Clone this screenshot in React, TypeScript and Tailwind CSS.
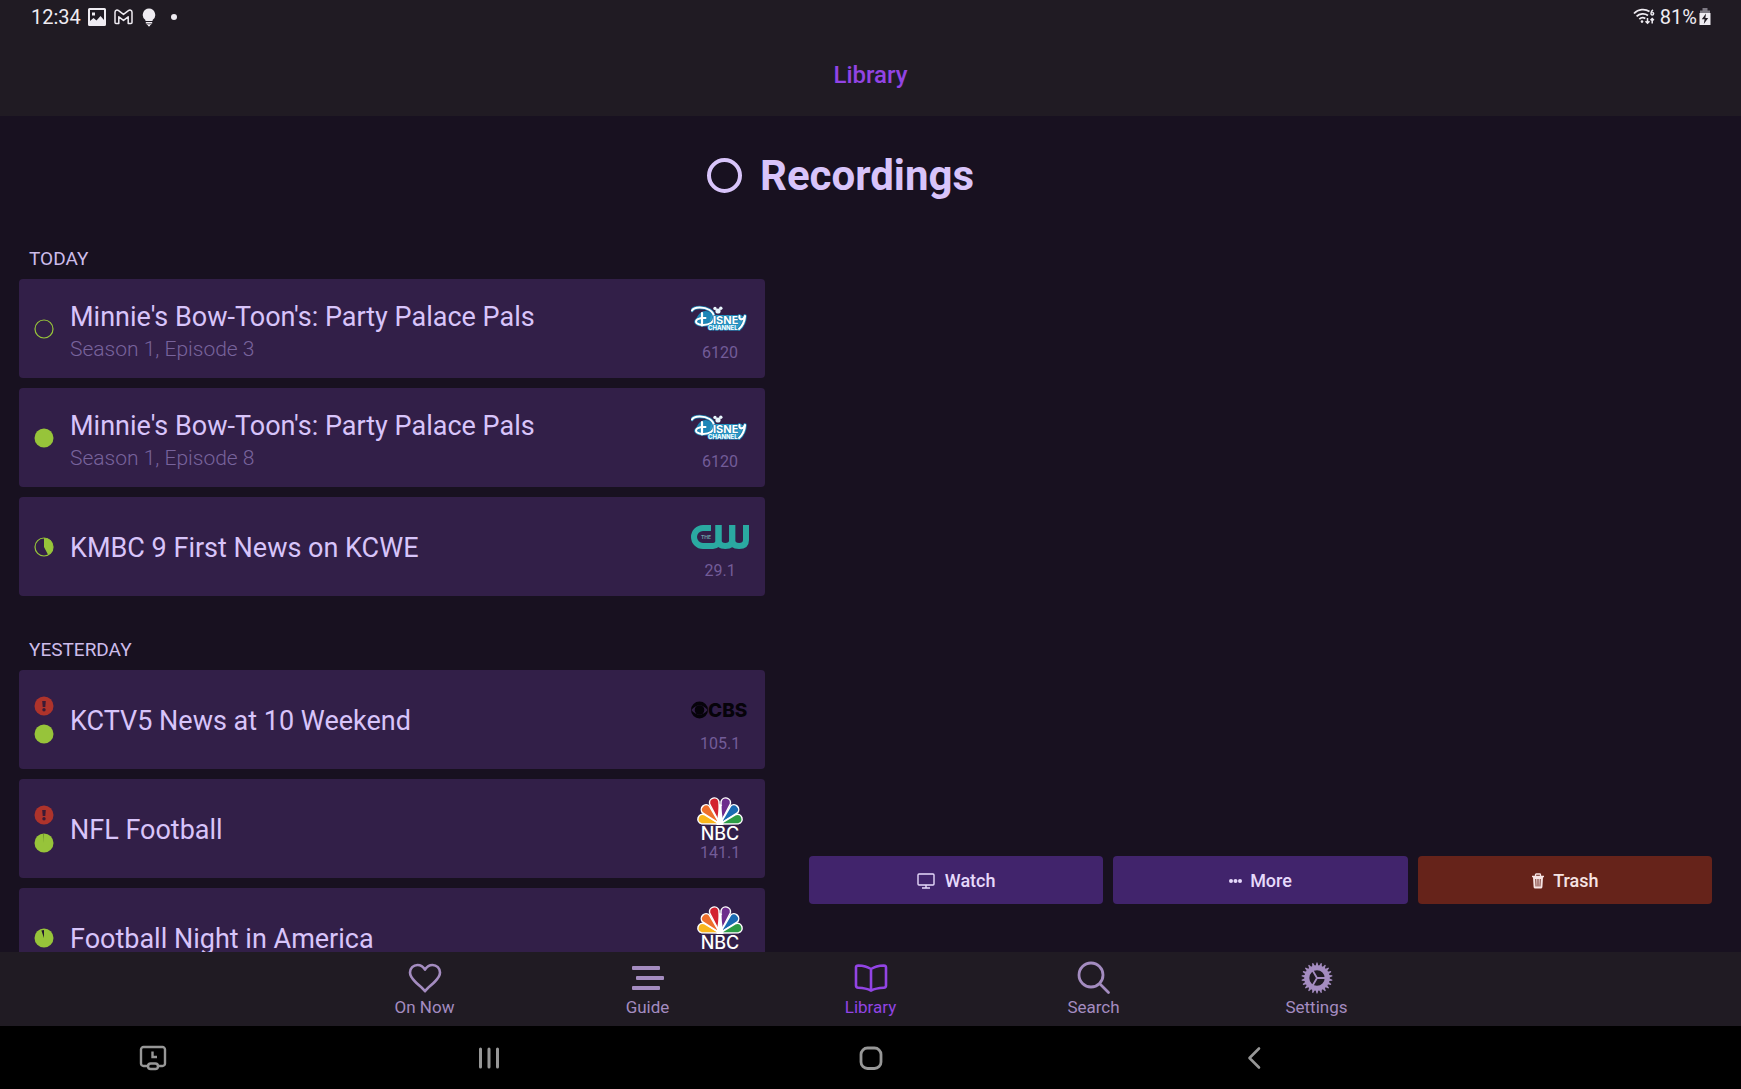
import React from "react";

type Progress = "empty" | "full" | "part" | "almost" | "nearly";
type Channel = "disney" | "cw" | "cbs" | "nbc";

interface Recording {
  title: string;
  subtitle?: string;
  progress: Progress;
  alert?: boolean;
  channel: Channel;
  number: string;
}

const sections: { label: string; items: Recording[] }[] = [
  {
    label: "TODAY",
    items: [
      { title: "Minnie's Bow-Toon's: Party Palace Pals", subtitle: "Season 1, Episode 3", progress: "empty", channel: "disney", number: "6120" },
      { title: "Minnie's Bow-Toon's: Party Palace Pals", subtitle: "Season 1, Episode 8", progress: "full", channel: "disney", number: "6120" },
      { title: "KMBC 9 First News on KCWE", progress: "part", channel: "cw", number: "29.1" },
    ],
  },
  {
    label: "YESTERDAY",
    items: [
      { title: "KCTV5 News at 10 Weekend", progress: "full", alert: true, channel: "cbs", number: "105.1" },
      { title: "NFL Football", progress: "almost", alert: true, channel: "nbc", number: "141.1" },
      { title: "Football Night in America", progress: "nearly", channel: "nbc", number: "141.1" },
    ],
  },
];

function ProgressDot({ kind }: { kind: Progress }) {
  const filled = kind === "full" || kind === "almost" || kind === "nearly";
  return (
    <svg width="20" height="20" viewBox="0 0 20 20" aria-hidden="true">
      <circle cx="10" cy="10" r={filled ? 9.5 : 9} fill={filled ? "#97c43a" : "none"} stroke="#97c43a" strokeWidth={filled ? 0 : 1.2} />
      {kind === "part" && <path d="M10 10V1a9 9 0 0 1 4.2 16.9z" fill="#97c43a" />}
      {kind === "almost" && <path d="M10 10 9.3 1h.7z" fill="#5f7f2c" />}
      {kind === "nearly" && <path d="M10 10 7.4 2.4 10 2z" fill="#21152e" />}
    </svg>
  );
}

function AlertDot() {
  return (
    <svg width="20" height="20" viewBox="0 0 20 20" aria-hidden="true">
      <circle cx="10" cy="10" r="9.5" fill="#ae332b" />
      <path d="M8.2 5h3.6l-.5 6H8.7z" fill="#3a1a35" />
      <circle cx="10" cy="13.8" r="1.7" fill="#3a1a35" />
    </svg>
  );
}

function DisneyLogo() {
  return (
    <svg width="58" height="28" viewBox="0 0 58 28" role="img" aria-label="Disney Channel" fill="none" strokeLinecap="round" strokeLinejoin="round">
      <path d="M5 15C8 5 16 4 21 9s-2 11-10 11-9-3-6-5z" fill="#1d86b8" />
      <path d="M20 10h30l3 2-4 12H17z" fill="#2c9cc9" />
      <path d="M1 5.500C3 1.500 13 1.500 18.500 5c5.500 3.600 6 10 1.500 13-4 2.600-12 2.600-14.500-.2-1.900-2.600 2.500-5.300 9-4.800" stroke="#1d7fae" strokeWidth="3.600" />
      <path d="M1 5.500C3 1.500 13 1.500 18.500 5c5.500 3.600 6 10 1.500 13-4 2.600-12 2.600-14.500-.2-1.900-2.600 2.500-5.300 9-4.800" stroke="#fff" strokeWidth="2" />
      <path d="M11 8v12.500" stroke="#fff" strokeWidth="2.200" />
      <g fill="#e9f7fd">
        <circle cx="27" cy="6" r="2.600" />
        <circle cx="24" cy="3.400" r="1.700" />
        <circle cx="29.800" cy="3.200" r="1.700" />
      </g>
      <text x="22" y="19" fontFamily="Inter, sans-serif" fontSize="11" fontWeight="700" fill="#fff" stroke="#1d7fae" strokeWidth="1.600" paintOrder="stroke">ISNE</text>
      <path d="M48.500 11c-1 4.500 4 4.500 5.500 0-.4 5.500-2 9.500-6 13" stroke="#1d7fae" strokeWidth="3.800" />
      <path d="M48.500 11c-1 4.500 4 4.500 5.500 0-.4 5.500-2 9.500-6 13" stroke="#fff" strokeWidth="2.200" />
      <text x="17" y="25" fontFamily="Inter, sans-serif" fontSize="6" fontWeight="700" fill="#fff" stroke="#2c9cc9" strokeWidth="1.200" paintOrder="stroke">CHANNEL</text>
    </svg>
  );
}

function CwLogo() {
  return (
    <svg width="58" height="24" viewBox="0 0 58 24" role="img" aria-label="The CW" fill="none" stroke="#2aa9a1" strokeWidth="6">
      <path d="M20 3h-8a9 9 0 0 0 0 18H22c3.600 0 5.500-2.400 5.500-6V0" />
      <path d="M27.500 0v15c0 4 2.400 6 6.800 6s6.900-2 6.900-6V0" />
      <path d="M41.200 0v15c0 4 2.400 6 6.900 6s6.900-2 6.900-6V0" />
      <text x="10" y="14" fontFamily="Inter, sans-serif" fontSize="5" fontWeight="700" fill="#6f9fa6" stroke="none">THE</text>
    </svg>
  );
}

function CbsLogo() {
  return (
    <svg width="60" height="24" viewBox="0 -3 60 24" role="img" aria-label="CBS">
      <circle cx="9.500" cy="9" r="8.500" fill="#06030a" />
      <path d="M1.300 9Q9.500-.600 17.700 9 9.500 18.600 1.300 9z" fill="#321f48" />
      <circle cx="9.500" cy="9" r="4.800" fill="#06030a" />
      <text x="18" y="16" fontFamily="Inter, sans-serif" fontSize="19" fontWeight="800" fill="#06030a">CBS</text>
    </svg>
  );
}

const feathers = [
  { angle: -74, color: "#f9b61b", length: 23 },
  { angle: -44, color: "#ee6f2b", length: 25 },
  { angle: -15, color: "#d3212f", length: 27 },
  { angle: 15, color: "#6d2b8c", length: 27 },
  { angle: 44, color: "#1a6bb2", length: 25 },
  { angle: 74, color: "#2c9c45", length: 23 },
];

function NbcLogo() {
  return (
    <svg width="48" height="50" viewBox="-1 -3 48 50" role="img" aria-label="NBC">
      {feathers.map((f) => {
        const c = f.length - 5;
        return (
          <path
            key={f.angle}
            transform={`translate(23 27) rotate(${f.angle})`}
            d={`M0 0L-4.800 ${-c}A4.800 4.800 0 0 1 4.800 ${-c}Z`}
            fill={f.color}
            stroke="#fff"
            strokeWidth="1.500"
            strokeLinejoin="round"
          />
        );
      })}
      <path d="M19.500 28 22.300 7l3 1-1.200 1.200L26.500 28z" fill="#fff" />
      <text x="23" y="43" textAnchor="middle" fontFamily="Inter, sans-serif" fontSize="18" fontWeight="500" fill="#fff">NBC</text>
    </svg>
  );
}

const logos: Record<Channel, () => React.JSX.Element> = {
  disney: DisneyLogo,
  cw: CwLogo,
  cbs: CbsLogo,
  nbc: NbcLogo,
};

function RecordingCard({ item }: { item: Recording }) {
  const Logo = logos[item.channel];
  return (
    <li>
      <button type="button" className="flex h-[99px] w-full items-center rounded bg-[#321f48] px-[15px] text-left">
        <span className="flex w-5 flex-col gap-2">
          {item.alert && <AlertDot />}
          <ProgressDot kind={item.progress} />
        </span>
        <span className="ml-4 flex min-w-0 flex-1 flex-col pt-0.5">
          <span className="truncate text-[27px] leading-[38px] text-[#d8c4fa]">{item.title}</span>
          {item.subtitle && <span className="text-[21px] leading-[26px] font-light text-[#78639c]">{item.subtitle}</span>}
        </span>
        <span className="flex w-[60px] flex-col items-center pt-1">
          <span className="flex h-11 items-center justify-center">
            <Logo />
          </span>
          <span className="text-base leading-6 text-[#735c98]">{item.number}</span>
        </span>
      </button>
    </li>
  );
}

function StatusBar() {
  return (
    <div className="flex h-[34px] items-center justify-between pr-[30px] pl-[31px] text-xl leading-none text-[#efecf2]">
      <div className="flex items-center">
        <span>12:34</span>
        <svg className="ml-[7px]" width="18" height="18" viewBox="0 0 18 18" aria-hidden="true">
          <path fillRule="evenodd" fill="#efecf2" d="M1.500 0h15A1.500 1.500 0 0 1 18 1.500v15a1.500 1.500 0 0 1-1.500 1.500h-15A1.500 1.500 0 0 1 0 16.500v-15A1.500 1.500 0 0 1 1.500 0zM2 2v11l3.500-3 3 2.500 4-4.500 3.500 4V2zM4 4.500h3v3H4z" />
        </svg>
        <svg className="ml-2" width="19" height="16" viewBox="0 0 19 16" fill="none" stroke="#efecf2" strokeWidth="1.500" strokeLinejoin="round" aria-hidden="true">
          <path d="M1 13.500V3.200C1 1 3.200.600 4.600 1.700L9.500 5.400l4.900-3.700C15.800.600 18 1 18 3.200v10.300q0 1-1 1h-2.800V7.800L9.500 11.400 4.800 7.800v6.700H2q-1 0-1-1z" />
        </svg>
        <svg className="ml-[9px]" width="14" height="19" viewBox="0 0 14 19" fill="#efecf2" aria-hidden="true">
          <path d="M7 .500a6.300 6.300 0 0 1 3.600 11.400V13H3.400v-1.100A6.300 6.300 0 0 1 7 .500zM3.800 14h6.400v1.500H3.800zM4.800 16.200h4.400V17H8.300l-.4 1.200H6.100L5.700 17h-.9z" />
        </svg>
        <span className="ml-[15px] size-1.5 rounded-full bg-[#efecf2]" />
      </div>
      <div className="flex items-center">
        <svg width="22" height="18" viewBox="0 0 22 18" fill="none" stroke="#efecf2" strokeWidth="1.800" aria-hidden="true">
          <path d="M1 5.500C5.500.800 12 .500 16.500 3.500M3.600 8.400c3-3 8-3.400 11.400-1M6.300 11.200c1.700-1.600 4.200-1.800 6-.6" />
          <circle cx="9" cy="13.600" r="1.300" fill="#efecf2" stroke="none" />
          <path strokeWidth="1.500" d="M14.500 10v5M12.500 13.300l2 2 2-2M19.200 15.500v-5M17.500 12.300l1.700-1.800 1.700 1.800M20 2c-2.400 1.500-2.600 5-.8 5s1.900-2.600 0-2.600" />
        </svg>
        <span className="ml-[5px]">81%</span>
        <svg className="ml-0.5" width="12" height="18" viewBox="0 0 12 18" aria-hidden="true">
          <path d="M3.500 0h5v2.500H11V5H1V2.500h2.500z" fill="#7d7983" />
          <path d="M.500 5h11v12h-11z" fill="#efecf2" />
          <path d="M7 5.500 2.800 11.300h2.800L4.800 16l4.400-6H6.400z" fill="#211c24" />
        </svg>
      </div>
    </div>
  );
}

const line = { fill: "none", stroke: "currentColor", strokeLinejoin: "round" as const, strokeLinecap: "round" as const };

const teeth = Array.from({ length: 22 }, (_, i) => (i * 360) / 22);

function GearIcon() {
  return (
    <svg width="32" height="32" viewBox="0 0 32 32" fill="none" stroke="currentColor">
      <circle cx="16" cy="16" r="10.200" strokeWidth="5" />
      {teeth.map((a) => (
        <path key={a} transform={`rotate(${a} 16 16)`} d="M14.600 4 15.500.500h1L17.400 4z" fill="currentColor" stroke="none" />
      ))}
      <path d="M16 16h9M16 16l-4.500-7.800M16 16l-4.500 7.800" strokeWidth="1.800" />
    </svg>
  );
}

const tabs = [
  {
    label: "On Now",
    icon: (
      <svg width="34" height="30" viewBox="0 0 34 30" {...line} strokeWidth="2.600">
        <path d="M17 28.200C15.500 25.800 10.500 22 7 18.500 4 15.500 2 12.800 2 9.600 2 5.200 5.300 2 9.500 2c3 0 5.700 1.700 7.500 4.600C18.800 3.700 21.500 2 24.500 2 28.700 2 32 5.200 32 9.600c0 3.200-2 5.900-5 8.900-3.500 3.500-8.500 7.300-10 9.700z" />
      </svg>
    ),
  },
  {
    label: "Guide",
    icon: (
      <svg width="34" height="26" viewBox="0 0 34 26" fill="currentColor">
        <rect x="1" y="1" width="28" height="4" rx="1" />
        <rect x="5" y="11" width="28" height="4" rx="1" />
        <rect x="1" y="21" width="28" height="4" rx="1" />
      </svg>
    ),
  },
  {
    label: "Library",
    active: true,
    icon: (
      <svg width="34" height="28" viewBox="0 0 34 28" {...line} strokeWidth="2.600">
        <path d="M17 5C13.500 2.800 9 1.700 4.300 1.500 2.700 1.500 2 2.200 2 3.600v18C2 23 2.700 23.700 4.300 23.800 9 24 13.500 24.800 17 26.600c3.500-1.800 8-2.600 12.700-2.800 1.600-.1 2.300-.8 2.300-2.200v-18c0-1.400-.7-2.100-2.300-2.100C25 1.700 20.500 2.800 17 5zM17 5v21.600" />
      </svg>
    ),
  },
  {
    label: "Search",
    icon: (
      <svg width="34" height="34" viewBox="0 0 34 34" {...line} strokeWidth="2.800">
        <circle cx="14" cy="14" r="12" />
        <path d="m23 23 8.500 8.500" />
      </svg>
    ),
  },
  { label: "Settings", icon: <GearIcon /> },
];

export default function App() {
  return (
    <div className="flex h-screen flex-col overflow-hidden bg-[#181120] font-['Roboto',sans-serif]">
      <header className="bg-[#201b23]">
        <StatusBar />
        <h1 className="flex h-[82px] items-center justify-center text-2xl font-medium text-[#9244e4]">Library</h1>
      </header>

      <main className="flex min-h-0 flex-1 flex-col">
        <div className="flex h-[123px] shrink-0 items-center justify-center gap-[18px] pr-[60px] pb-1 text-[#d8c4fa]">
          <span className="size-[35px] rounded-full border-4 border-[#d8c4fa]" />
          <h2 className="text-[42px] leading-none font-bold">Recordings</h2>
        </div>
        <div className="flex min-h-0 flex-1">
          <div className="flex w-[44%] flex-col gap-[34px] overflow-hidden pr-px pl-[19px]">
            {sections.map((section) => (
              <section key={section.label}>
                <h3 className="flex h-10 items-center pl-2.5 text-[19px] text-[#cdbcea]">{section.label}</h3>
                <ul className="flex flex-col gap-2.5">
                  {section.items.map((item, i) => (
                    <RecordingCard key={i} item={item} />
                  ))}
                </ul>
              </section>
            ))}
          </div>
          <div className="flex flex-1 items-end gap-2.5 pr-[29px] pb-12 pl-[43px] text-lg font-medium">
            <button type="button" className="flex h-12 flex-1 items-center justify-center gap-2.5 rounded-sm bg-[#41246c] pt-0.5 text-[#e6d9fb]">
              <svg width="18" height="16" viewBox="0 0 18 16" fill="none" stroke="currentColor" strokeWidth="1.400" aria-hidden="true">
                <rect x="1" y="1" width="16" height="11" rx="1" />
                <path d="M9 12v2.500M5 15h8" />
              </svg>
              Watch
            </button>
            <button type="button" className="flex h-12 flex-1 items-center justify-center gap-2 rounded-sm bg-[#41246c] pt-0.5 text-[#e6d9fb]">
              <svg width="13" height="4" viewBox="0 0 13 4" fill="currentColor" aria-hidden="true">
                <circle cx="2" cy="2" r="2" />
                <circle cx="6.500" cy="2" r="2" />
                <circle cx="11" cy="2" r="2" />
              </svg>
              More
            </button>
            <button type="button" className="flex h-12 flex-1 items-center justify-center gap-2 rounded-sm bg-[#66231a] pt-0.5 text-[#f6e3e3]">
              <svg width="14" height="16" viewBox="0 0 14 16" aria-hidden="true">
                <path d="M4.500 3V1.800q0-.8.800-.8h3.400q.8 0 .8.800V3" fill="none" stroke="currentColor" strokeWidth="1.300" />
                <path fillRule="evenodd" fill="currentColor" d="M1 2.700h12v1.600h-1L11.400 14q-.1 1.500-1.600 1.500H4.200q-1.500 0-1.600-1.500L2 4.300H1zM4.300 6l.3 7.500h.9L5.200 6zM6.500 6v7.500h1V6zM8.800 6l-.3 7.500h.9L9.700 6z" />
              </svg>
              Trash
            </button>
          </div>
        </div>
      </main>

      <nav aria-label="Sections" className="flex h-[74px] shrink-0 justify-center bg-[#201b23]">
        {tabs.map((tab) => (
          <button
            key={tab.label}
            type="button"
            className={`flex w-[223px] flex-col items-center pt-2.5 ${tab.active ? "text-[#9244e4]" : "text-[#a48cc0]"}`}
          >
            <span className="flex h-8 items-center justify-center">{tab.icon}</span>
            <span className="text-[17px] leading-[26px]">{tab.label}</span>
          </button>
        ))}
      </nav>

      <nav aria-label="System" className="grid h-[63px] shrink-0 grid-cols-[298px_1fr_1fr_1fr_296px] bg-black text-[#979797]">
        <button type="button" aria-label="Recent screenshot" className="flex items-center justify-center pl-2">
          <svg width="28" height="26" viewBox="0 0 28 26" {...line} strokeWidth="2.400">
            <path d="M9 21H4.500A2.500 2.500 0 0 1 2 18.500v-14A2.500 2.500 0 0 1 4.500 2h19A2.500 2.500 0 0 1 26 4.500v14a2.500 2.500 0 0 1-2.500 2.500H19" />
            <rect x="9" y="18.500" width="10" height="5.500" rx="2.700" />
            <path d="M13.500 6.500V12H18" strokeLinecap="butt" strokeLinejoin="miter" />
          </svg>
        </button>
        <button type="button" aria-label="Recents" className="flex items-center justify-center">
          <svg width="22" height="24" viewBox="0 0 22 24" {...line} strokeWidth="3">
            <path d="M2.500 3v18M11 3v18M19.500 3v18" />
          </svg>
        </button>
        <button type="button" aria-label="Home" className="flex items-center justify-center">
          <svg width="24" height="24" viewBox="0 0 24 24" {...line} strokeWidth="2.800">
            <rect x="2" y="2" width="20" height="20.500" rx="6.500" />
          </svg>
        </button>
        <button type="button" aria-label="Back" className="flex items-center justify-center">
          <svg width="14" height="24" viewBox="0 0 14 24" {...line} strokeWidth="2.600">
            <path d="M12 2.500 2.500 12l9.500 9.500" />
          </svg>
        </button>
      </nav>
    </div>
  );
}
